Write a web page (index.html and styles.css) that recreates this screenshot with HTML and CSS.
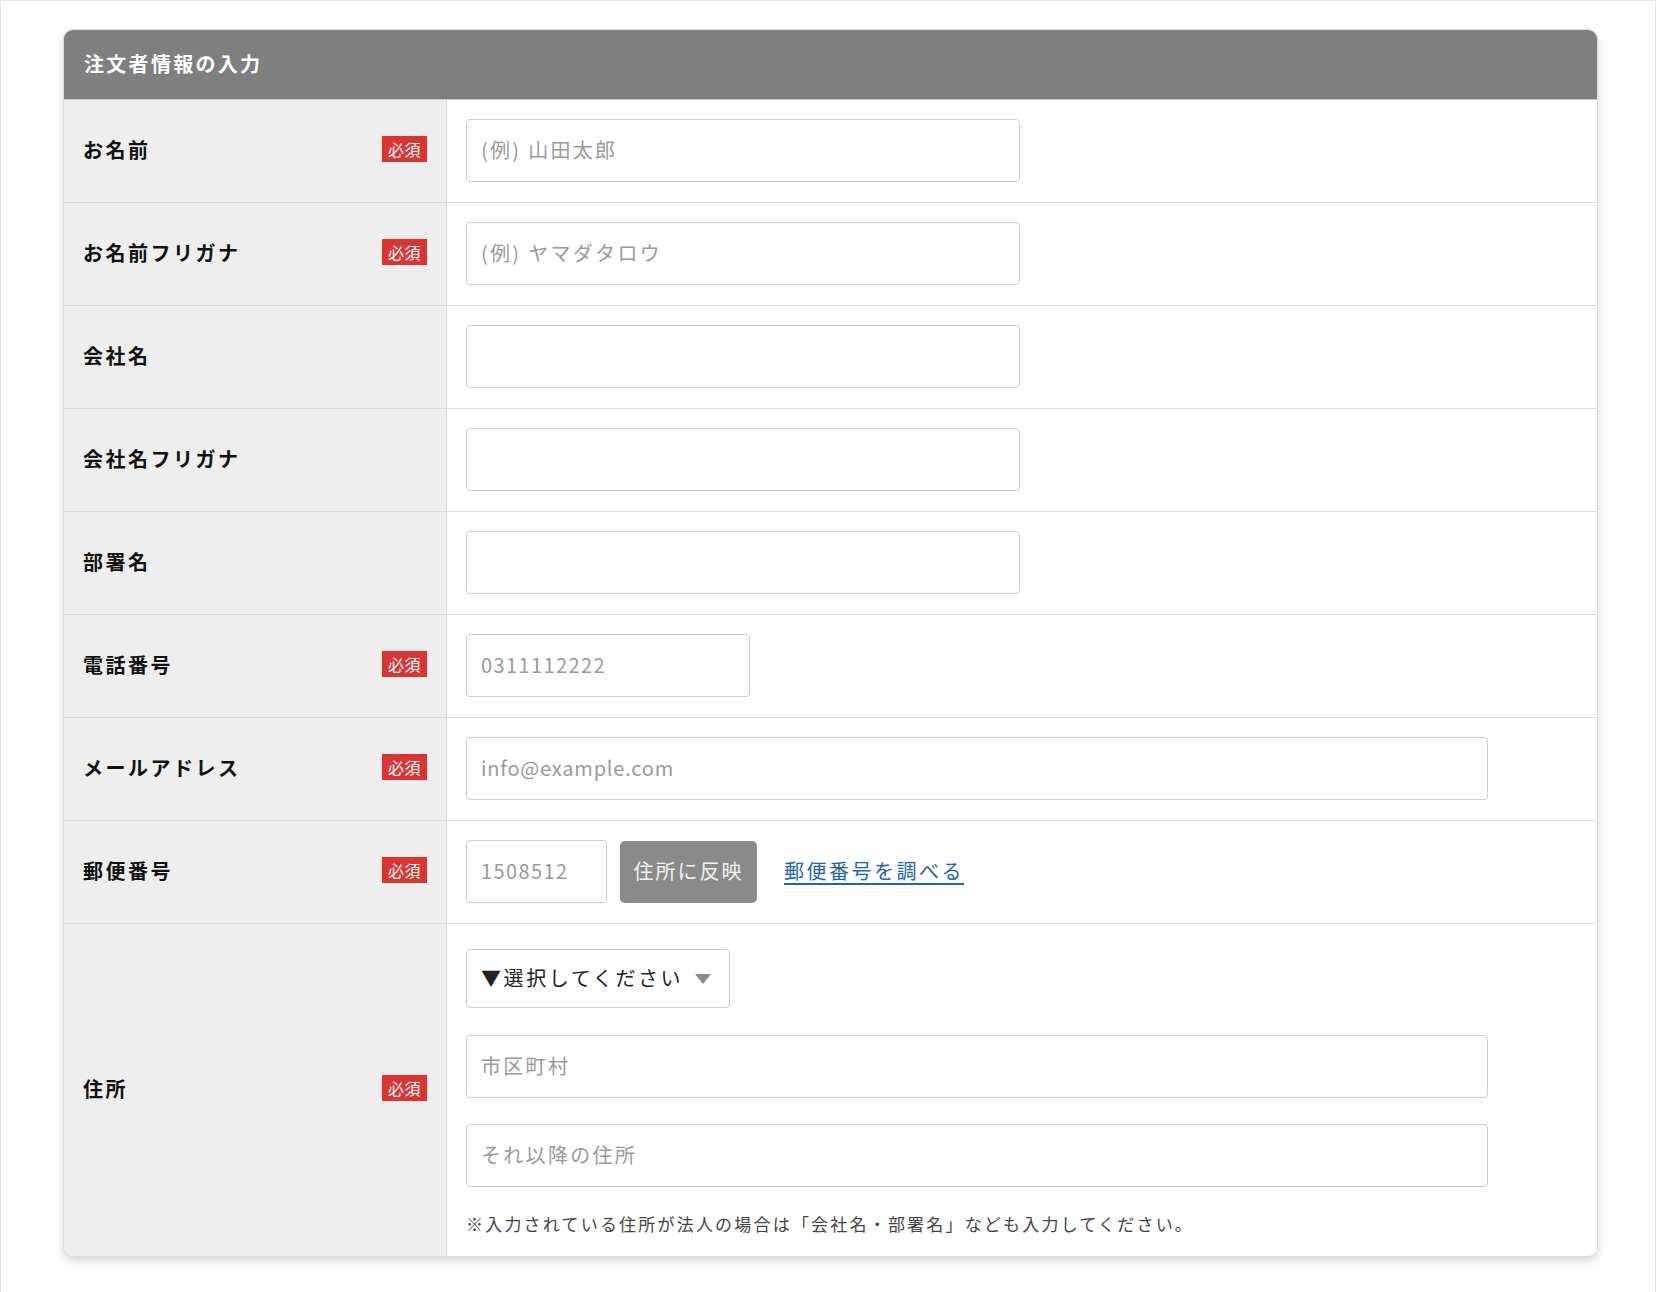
FILE: index.html
```html
<!DOCTYPE html>
<html lang="ja">
<head>
<meta charset="utf-8">
<title>注文者情報の入力</title>
<link rel="stylesheet" href="styles.css">
</head>
<body>
<div class="page">
  <section class="card">
    <h2 class="card-head">注文者情報の入力</h2>
    <div class="form">
      <div class="label"><span>お名前</span><em class="req">必須</em></div>
      <div class="field"><input class="inp w-md" type="text" placeholder="(例) 山田太郎"></div>

      <div class="label"><span>お名前フリガナ</span><em class="req">必須</em></div>
      <div class="field"><input class="inp w-md" type="text" placeholder="(例) ヤマダタロウ"></div>

      <div class="label"><span>会社名</span></div>
      <div class="field"><input class="inp w-md" type="text"></div>

      <div class="label"><span>会社名フリガナ</span></div>
      <div class="field"><input class="inp w-md" type="text"></div>

      <div class="label"><span>部署名</span></div>
      <div class="field"><input class="inp w-md" type="text"></div>

      <div class="label"><span>電話番号</span><em class="req">必須</em></div>
      <div class="field"><input class="inp w-sm num" type="text" placeholder="0311112222"></div>

      <div class="label"><span>メールアドレス</span><em class="req">必須</em></div>
      <div class="field"><input class="inp w-lg latin" type="text" placeholder="info@example.com"></div>

      <div class="label"><span>郵便番号</span><em class="req">必須</em></div>
      <div class="field zip-row">
        <input class="inp w-xs num" type="text" placeholder="1508512">
        <button class="btn" type="button">住所に反映</button>
        <a class="link" href="#">郵便番号を調べる</a>
      </div>

      <div class="label last"><span>住所</span><em class="req">必須</em></div>
      <div class="field addr last">
        <div class="sel-wrap">
          <select class="sel">
            <option>▼選択してください</option>
          </select>
        </div>
        <input class="inp w-lg" type="text" placeholder="市区町村">
        <input class="inp w-lg" type="text" placeholder="それ以降の住所">
        <p class="note">※入力されている住所が法人の場合は「会社名・部署名」なども入力してください。</p>
      </div>
    </div>
  </section>
</div>
</body>
</html>
```

FILE: styles.css
```css
* { box-sizing: border-box; }
html, body { margin: 0; padding: 0; background: #fff; }
body {
  font-family: "Noto Sans CJK JP", "Noto Sans", sans-serif;
  color: #222;
}
.page {
  border: 1px solid #e4e4e4;
  border-bottom: none;
  min-height: 1292px;
  padding: 28px 57px 40px 62px;
}
.card {
  border: 1px solid #dcdcdc;
  border-radius: 10px;
  background: #fff;
  box-shadow: 0 4px 10px rgba(0,0,0,0.17);
  overflow: hidden;
}
.card-head {
  margin: 0;
  height: 70px;
  background: #7f7f7f;
  color: #fff;
  font-size: 20px;
  font-weight: 700;
  letter-spacing: 2.3px;
  line-height: 68px;
  padding-left: 20px;
  border-bottom: 1px solid #c8c8c8;
}
.form {
  display: grid;
  grid-template-columns: 383px 1fr;
}
.label {
  background: #eeeeee;
  border-right: 1px solid #dddddd;
  border-bottom: 1px solid #dddddd;
  display: flex;
  align-items: center;
  justify-content: space-between;
  padding: 0 19px 0 19px;
  font-size: 20px;
  font-weight: 700;
  letter-spacing: 2.5px;
  color: #111;
}
.label > span { margin-bottom: 3px; }
.req {
  font-style: normal;
  font-weight: 400;
  background: #dd3333;
  color: #fff;
  font-size: 16px;
  letter-spacing: 0.5px;
  width: 45px;
  height: 26px;
  line-height: 26px;
  text-align: center;
  margin-bottom: 4px;
}
.field {
  border-bottom: 1px solid #dddddd;
  padding: 19px 20px 20px 19px;
  display: flex;
  align-items: center;
}
.last { border-bottom: none; }
.inp {
  height: 63px;
  border: 1px solid #cccccc;
  border-radius: 4px;
  padding: 0 13px 2px 14px;
  font-family: "Noto Sans CJK JP", "Noto Sans", sans-serif;
  font-size: 20px;
  letter-spacing: 2.3px;
  color: #333;
  background: #fff;
  outline: none;
}
.inp.num { letter-spacing: 1.4px; }
.inp.latin { letter-spacing: 0.8px; }
.inp::placeholder { color: #9a9a9a; }
.w-md { width: 554px; }
.w-sm { width: 284px; }
.w-lg { width: 1022px; }
.w-xs { width: 141px; }
.btn {
  margin-left: 13px;
  width: 137px;
  height: 62px;
  border: none;
  border-radius: 5px;
  background: #8a8a8a;
  color: #f2f2f2;
  font-family: "Noto Sans CJK JP", "Noto Sans", sans-serif;
  font-size: 20px;
  letter-spacing: 2px;
  padding: 0 0 2px 0;
}
.link {
  margin-left: 27px;
  margin-bottom: 2px;
  color: #1f63b5;
  font-size: 20px;
  letter-spacing: 2.5px;
  text-decoration: underline;
  text-underline-offset: 4px;
}
.addr {
  flex-direction: column;
  align-items: flex-start;
  padding-top: 25px;
  padding-bottom: 19px;
}
.sel-wrap {
  position: relative;
  width: 264px;
  height: 59px;
}
.sel-wrap::after {
  content: "";
  position: absolute;
  right: 19px;
  top: 25px;
  border-left: 8px solid transparent;
  border-right: 8px solid transparent;
  border-top: 10px solid #8a8a8a;
  pointer-events: none;
}
.sel {
  -webkit-appearance: none;
  appearance: none;
  width: 264px;
  height: 59px;
  border: 1px solid #cccccc;
  border-radius: 4px;
  background: #fff;
  padding: 0 12px 2px 14px;
  font-family: "Noto Sans CJK JP", "Noto Sans", sans-serif;
  font-size: 20px;
  letter-spacing: 2.6px;
  color: #222;
}
.addr .inp { margin-top: 27px; }
.addr .inp + .inp { margin-top: 26px; }
.note {
  margin: 24px 0 0 0;
  font-size: 17px;
  line-height: 26px;
  letter-spacing: 2.2px;
  color: #444;
}
```
